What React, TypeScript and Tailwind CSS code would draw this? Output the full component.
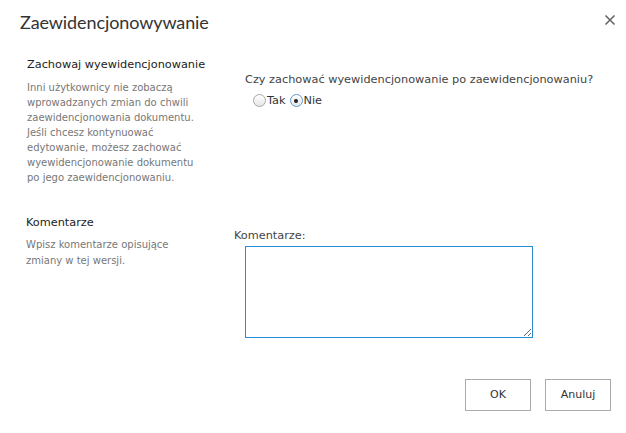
import { useState } from "react";

const font = { fontFamily: '"DejaVu Sans", Verdana, sans-serif' };

function Radio({ checked, label, onClick }: { checked: boolean; label: string; onClick: () => void }) {
  return (
    <label className="flex items-center cursor-pointer" onClick={onClick}>
      <span
        className={`w-[13px] h-[13px] rounded-full border flex items-center justify-center bg-gradient-to-b from-white to-[#e6e6e6] ${
          checked ? "border-[#5a9ad8] from-[#e8f2fc] to-[#bcd8f4]" : "border-[#a8a8a8]"
        }`}
      >
        {checked && <span className="w-[4px] h-[4px] rounded-full bg-[#222]" />}
      </span>
      <span className="ml-[1px] text-[11.3px] leading-[13px] text-[#333]">{label}</span>
    </label>
  );
}

export default function App() {
  const [keep, setKeep] = useState(false);
  const [comment, setComment] = useState("");

  return (
    <div className="w-[626px] h-[433px] bg-white flex flex-col" style={font}>
      {/* Nagłówek */}
      <div className="flex justify-between items-start pl-[20px] pr-[9px] pt-[9px]">
        <h1
          className="text-[18px] leading-[26px] tracking-[-0.1px] text-[#333]"
          style={{ fontFamily: 'Lato, "Noto Sans", sans-serif' }}
        >
          Zaewidencjonowywanie
        </h1>
        <button className="mt-[4px] p-[1px]">
          <svg width="12" height="12" viewBox="0 0 12 12">
            <path d="M1.5 1.5 L10.5 10.5 M10.5 1.5 L1.5 10.5" stroke="#666" strokeWidth="1.6" />
          </svg>
        </button>
      </div>

      {/* Zachowaj wyewidencjonowanie */}
      <div className="flex mt-[22px]">
        <div className="w-[218px] pl-[27px]">
          <div className="text-[11.3px] leading-[15px] text-[#222]">Zachowaj wyewidencjonowanie</div>
          <p className="mt-[8px] text-[10px] leading-[15px] text-[#777] w-[178px]">
            Inni użytkownicy nie zobaczą wprowadzanych zmian do chwili zaewidencjonowania dokumentu.
            Jeśli chcesz kontynuować edytowanie, możesz zachować wyewidencjonowanie dokumentu po
            jego zaewidencjonowaniu.
          </p>
        </div>
        <div className="pl-[27px] pt-[15px]">
          <div className="text-[11.3px] leading-[15px] text-[#444]">
            Czy zachować wyewidencjonowanie po zaewidencjonowaniu?
          </div>
          <div className="flex items-center gap-[4px] mt-[7px] ml-[8px]">
            <Radio checked={keep} label="Tak" onClick={() => setKeep(true)} />
            <Radio checked={!keep} label="Nie" onClick={() => setKeep(false)} />
          </div>
        </div>
      </div>

      {/* Komentarze */}
      <div className="flex mt-[30px]">
        <div className="w-[207px] pl-[26px]">
          <div className="text-[11.3px] leading-[15px] text-[#222]">Komentarze</div>
          <p className="mt-[7px] text-[10px] leading-[16px] text-[#777] w-[150px]">
            Wpisz komentarze opisujące zmiany w tej wersji.
          </p>
        </div>
        <div className="pt-[13px] pl-[27px]">
          <div className="text-[11.3px] leading-[15px] text-[#444]">Komentarze:</div>
          <textarea
            value={comment}
            onChange={e => setComment(e.target.value)}
            className="block mt-[3px] ml-[11px] w-[288px] h-[92px] border border-[#2a8dd4] outline-none resize p-1 text-[11px]"
          />
        </div>
      </div>

      {/* Przyciski */}
      <div className="flex justify-end gap-[14px] pr-[15px] mt-[41px]">
        <button className="w-[66px] h-[32px] border border-[#ababab] bg-white text-[11px] text-[#333]">OK</button>
        <button className="w-[66px] h-[32px] border border-[#ababab] bg-white text-[11px] text-[#333]">Anuluj</button>
      </div>
    </div>
  );
}
